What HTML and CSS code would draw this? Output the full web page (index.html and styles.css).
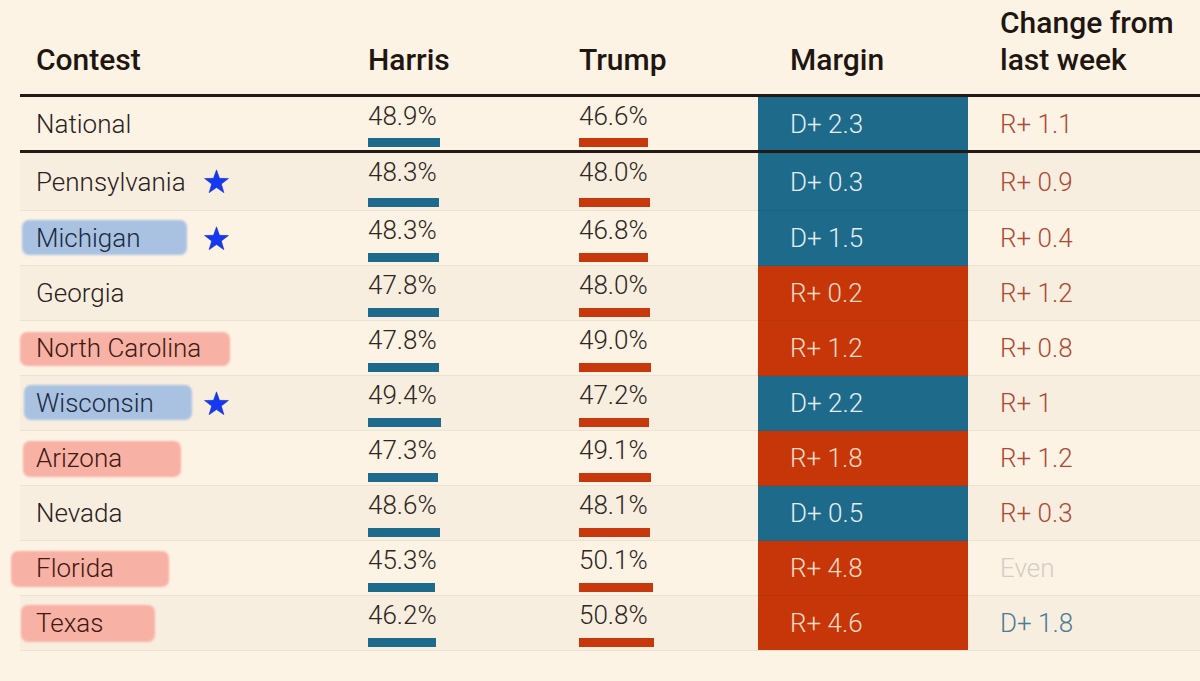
FILE: index.html
```html
<!DOCTYPE html>
<html lang="en">
<head>
<meta charset="utf-8">
<title>Polling averages</title>
<link rel="stylesheet" href="styles.css">
</head>
<body>
<svg width="0" height="0" class="defs" aria-hidden="true">
  <defs>
    <symbol id="star" viewBox="0 0 24 23">
      <path d="M12 0.8 L14.75 8.6 L23 8.75 L16.45 13.8 L18.85 21.8 L12 17.05 L5.15 21.8 L7.55 13.8 L1 8.75 L9.25 8.6 Z"/>
    </symbol>
  </defs>
</svg>
<div class="table">
  <div class="head">
    <div class="th th-contest">Contest</div>
    <div class="th">Harris</div>
    <div class="th">Trump</div>
    <div class="th th-pad">Margin</div>
    <div class="th th-pad">Change from<br>last week</div>
  </div>

  <div class="row national">
    <div class="contest"><span class="name">National</span></div>
    <div class="val"><span class="num">48.9%</span><span class="bar bar-d" style="width:72px"></span></div>
    <div class="val"><span class="num">46.6%</span><span class="bar bar-r" style="width:69px"></span></div>
    <div class="margin m-d">D+ 2.3</div>
    <div class="chg chg-r">R+ 1.1</div>
  </div>

  <div class="row alt first">
    <div class="contest"><span class="name">Pennsylvania</span><svg class="star"><use href="#star"/></svg></div>
    <div class="val"><span class="num">48.3%</span><span class="bar bar-d" style="width:71px"></span></div>
    <div class="val"><span class="num">48.0%</span><span class="bar bar-r" style="width:71px"></span></div>
    <div class="margin m-d">D+ 0.3</div>
    <div class="chg chg-r">R+ 0.9</div>
  </div>

  <div class="row">
    <div class="contest"><span class="name hl hl-blue hl-mi">Michigan</span><svg class="star"><use href="#star"/></svg></div>
    <div class="val"><span class="num">48.3%</span><span class="bar bar-d" style="width:71px"></span></div>
    <div class="val"><span class="num">46.8%</span><span class="bar bar-r" style="width:69px"></span></div>
    <div class="margin m-d">D+ 1.5</div>
    <div class="chg chg-r">R+ 0.4</div>
  </div>

  <div class="row alt">
    <div class="contest"><span class="name">Georgia</span></div>
    <div class="val"><span class="num">47.8%</span><span class="bar bar-d" style="width:71px"></span></div>
    <div class="val"><span class="num">48.0%</span><span class="bar bar-r" style="width:71px"></span></div>
    <div class="margin m-r">R+ 0.2</div>
    <div class="chg chg-r">R+ 1.2</div>
  </div>

  <div class="row">
    <div class="contest"><span class="name hl hl-red hl-nc">North Carolina</span></div>
    <div class="val"><span class="num">47.8%</span><span class="bar bar-d" style="width:71px"></span></div>
    <div class="val"><span class="num">49.0%</span><span class="bar bar-r" style="width:72px"></span></div>
    <div class="margin m-r">R+ 1.2</div>
    <div class="chg chg-r">R+ 0.8</div>
  </div>

  <div class="row alt">
    <div class="contest"><span class="name hl hl-blue hl-wi">Wisconsin</span><svg class="star"><use href="#star"/></svg></div>
    <div class="val"><span class="num">49.4%</span><span class="bar bar-d" style="width:73px"></span></div>
    <div class="val"><span class="num">47.2%</span><span class="bar bar-r" style="width:70px"></span></div>
    <div class="margin m-d">D+ 2.2</div>
    <div class="chg chg-r">R+ 1</div>
  </div>

  <div class="row">
    <div class="contest"><span class="name hl hl-red hl-az">Arizona</span></div>
    <div class="val"><span class="num">47.3%</span><span class="bar bar-d" style="width:70px"></span></div>
    <div class="val"><span class="num">49.1%</span><span class="bar bar-r" style="width:72px"></span></div>
    <div class="margin m-r">R+ 1.8</div>
    <div class="chg chg-r">R+ 1.2</div>
  </div>

  <div class="row alt">
    <div class="contest"><span class="name">Nevada</span></div>
    <div class="val"><span class="num">48.6%</span><span class="bar bar-d" style="width:72px"></span></div>
    <div class="val"><span class="num">48.1%</span><span class="bar bar-r" style="width:71px"></span></div>
    <div class="margin m-d">D+ 0.5</div>
    <div class="chg chg-r">R+ 0.3</div>
  </div>

  <div class="row">
    <div class="contest"><span class="name hl hl-red hl-fl">Florida</span></div>
    <div class="val"><span class="num">45.3%</span><span class="bar bar-d" style="width:67px"></span></div>
    <div class="val"><span class="num">50.1%</span><span class="bar bar-r" style="width:74px"></span></div>
    <div class="margin m-r">R+ 4.8</div>
    <div class="chg chg-even">Even</div>
  </div>

  <div class="row alt last">
    <div class="contest"><span class="name hl hl-red hl-tx">Texas</span></div>
    <div class="val"><span class="num">46.2%</span><span class="bar bar-d" style="width:68px"></span></div>
    <div class="val"><span class="num">50.8%</span><span class="bar bar-r" style="width:75px"></span></div>
    <div class="margin m-r">R+ 4.6</div>
    <div class="chg chg-d">D+ 1.8</div>
  </div>
</div>
</body>
</html>
```

FILE: styles.css
```css
* { box-sizing: border-box; }

html, body {
  margin: 0;
  padding: 0;
  background: #fcf3e5;
  font-family: Roboto, "Liberation Sans", Arial, sans-serif;
  color: #2b211b;
}

body {
  width: 1200px;
  height: 681px;
  overflow: hidden;
}

.defs { position: absolute; }

.table {
  margin-left: 20px;
  width: 1180px;
}

.head,
.row {
  display: grid;
  grid-template-columns: 348px 211px 179px 210px 232px;
}

.head {
  height: 94px;
  align-items: end;
  padding-bottom: 16px;
}

.th {
  font-size: 30px;
  line-height: 37px;
  font-weight: 500;
  color: #1f1611;
}

.th-contest { padding-left: 16px; }
.th-pad { padding-left: 32px; }

.row {
  height: 55px;
  border-bottom: 1px solid #ece2d2;
  font-size: 26px;
  font-weight: 300;
}

.row.alt { background: #f7eee0; }

.row.national {
  height: 59px;
  border-top: 3px solid #231a14;
  border-bottom: 3px solid #231a14;
}

.row.first { height: 58px; }

.contest {
  display: flex;
  align-items: center;
  padding-left: 16px;
  color: #2b211b;
}

.name {
  position: relative;
  width: 167px;
  white-space: nowrap;
  line-height: 30px;
  z-index: 0;
}

.hl::before {
  content: "";
  position: absolute;
  z-index: -1;
  left: var(--l);
  right: var(--r);
  top: var(--t);
  bottom: var(--b);
  border-radius: 7px;
  filter: blur(1.2px);
}

.hl-blue::before { background: #a9c2e2; }
.hl-red::before { background: #f8b1a5; }
.hl-blue { color: #1c2a3e; }
.hl-red { color: #3e1a12; }

.hl-mi { --l: -14px; --r: 16px; --t: -3px; --b: -2px; }
.hl-nc { --l: -16px; --r: -27px; --t: -1px; --b: -3px; }
.hl-wi { --l: -12px; --r: 11px; --t: -3px; --b: -2px; }
.hl-az { --l: -13px; --r: 22px; --t: -2px; --b: -4px; }
.hl-fl { --l: -25px; --r: 34px; --t: -2px; --b: -4px; }
.hl-tx { --l: -15px; --r: 48px; --t: -3px; --b: -4px; }

.star {
  width: 27px;
  height: 25px;
  fill: #1538f2;
  stroke: #0f2bb8;
  stroke-width: 0.5;
}

.val {
  display: flex;
  flex-direction: column;
  justify-content: space-between;
  align-items: flex-start;
  padding: 4px 0 3px;
}

.num {
  line-height: 30px;
  color: #2f2620;
}

.bar {
  display: block;
  height: 9px;
}

.bar-d { background: #1e6a8c; }
.bar-r { background: #c8380d; }

.margin {
  display: flex;
  align-items: center;
  padding-left: 32px;
  margin-bottom: -1px;
  border-bottom: 1px solid rgba(40, 20, 10, 0.08);
}

.national .margin,
.last .margin {
  margin-bottom: 0;
  border-bottom: 0;
}

.m-d { background: #1d6a8b; color: #e4eef2; }
.m-r { background: #c73609; color: #f9dcc6; }

.chg {
  display: flex;
  align-items: center;
  padding-left: 32px;
}

.chg-r { color: #ad4a34; }
.chg-d { color: #4b7c93; }
.chg-even { color: #d5cdc2; }
```
